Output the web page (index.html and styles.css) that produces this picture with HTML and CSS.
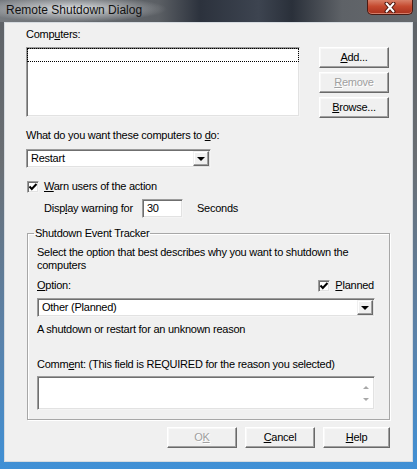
FILE: index.html
```html
<!DOCTYPE html>
<html lang="en">
<head>
    <meta charset="UTF-8">
    <title>Remote Shutdown Dialog</title>
    <link rel="stylesheet" href="styles.css">
</head>
<body>

<div class="window">
    <div class="titlebar">
        <span class="title">Remote Shutdown Dialog</span>
        <span class="close">
            <svg width="14" height="11" viewBox="0 0 14 11">
                <path d="M3.5 1.5 L10.5 9.5 M10.5 1.5 L3.5 9.5" stroke="#4a140c" stroke-width="4" stroke-linecap="round"/>
                <path d="M3.5 1.5 L10.5 9.5 M10.5 1.5 L3.5 9.5" stroke="#fff" stroke-width="2" stroke-linecap="round"/>
            </svg>
        </span>
    </div>

    <div class="client">
        <div class="computers">
            <div class="computers-list">
                <div class="label">Comp<u>u</u>ters:</div>
                <div class="listbox sunken"><div class="focus-row"></div></div>
            </div>
            <div class="side-buttons">
                <button class="btn"><u>A</u>dd...</button>
                <button class="btn" disabled><u>R</u>emove</button>
                <button class="btn"><u>B</u>rowse...</button>
            </div>
        </div>

        <div class="label action-label">What do you want these computers to <u>d</u>o:</div>
        <div class="combo sunken action-combo">
            <span class="combo-text">Restart</span>
            <span class="drop"></span>
        </div>

        <div class="check-row warn-row">
            <span class="checkbox sunken">
                <svg width="10" height="10" viewBox="0 0 10 10"><path d="M1.5 4.5 L3.8 7 L8.5 2" fill="none" stroke="#000" stroke-width="2"/></svg>
            </span>
            <span><u>W</u>arn users of the action</span>
        </div>

        <div class="warning-row">
            <span class="warning-label">Disp<u>l</u>ay warning for</span>
            <span class="textbox sunken seconds-box">30</span>
            <span class="seconds">Seconds</span>
        </div>

        <fieldset class="group">
            <legend>Shutdown Event Tracker</legend>
            <p class="group-text">Select the option that best describes why you want to shutdown the<br>computers</p>
            <div class="option-row">
                <span><u>O</u>ption:</span>
                <span class="check-row">
                    <span class="checkbox sunken">
                        <svg width="10" height="10" viewBox="0 0 10 10"><path d="M1.5 4.5 L3.8 7 L8.5 2" fill="none" stroke="#000" stroke-width="2"/></svg>
                    </span>
                    <span><u>P</u>lanned</span>
                </span>
            </div>
            <div class="combo sunken option-combo">
                <span class="combo-text">Other (Planned)</span>
                <span class="drop"></span>
            </div>
            <p class="reason">A shutdown or restart for an unknown reason</p>
            <div class="label comment-label">Comm<u>e</u>nt: (This field is REQUIRED for the reason you selected)</div>
            <div class="textbox sunken comment-box">
                <div class="scroll">
                    <span class="arrow-up"></span>
                    <span class="arrow-down"></span>
                </div>
            </div>
        </fieldset>

        <div class="dialog-buttons">
            <button class="btn" disabled>O<u>K</u></button>
            <button class="btn"><u>C</u>ancel</button>
            <button class="btn help"><u>H</u>elp</button>
        </div>
    </div>
</div>

</body>
</html>
```

FILE: styles.css
```css
body {
    margin: 0;
    font-family: "Liberation Sans", Arial, sans-serif;
    font-size: 11px;
    letter-spacing: -0.25px;
    color: #000;
}
.window {
    width: 417px;
    height: 469px;
    display: flex;
    flex-direction: column;
    overflow: hidden;
    background: linear-gradient(to bottom, #5d6166 0%, #6a6f74 35%, #5a82aa 72%, #3f90d6 100%);
}
.titlebar {
    height: 22px;
    flex: none;
    display: flex;
    justify-content: space-between;
    align-items: flex-start;
    background:
        radial-gradient(ellipse 95px 13px at 72px 9px, rgba(228, 230, 232, 0.95), rgba(228, 230, 232, 0) 100%),
        linear-gradient(to right, #767a7f 0%, #5b5f64 38%, #2c323d 48%, #3d4450 62%, #2a303a 70%, #5e6267 82%, #66696d 100%);
}
.title {
    font-size: 12px;
    letter-spacing: 0;
    line-height: 14px;
    padding: 3px 0 0 6px;
    color: #111;
}
.close {
    width: 44px;
    height: 14px;
    margin-right: 4px;
    display: flex;
    justify-content: center;
    align-items: center;
    border: 1px solid #4b1a12;
    border-top: none;
    border-radius: 0 0 5px 5px;
    background: linear-gradient(to bottom, #d88068 0%, #c54a30 45%, #a8301c 100%);
    box-shadow: inset 0 -1px 0 rgba(255, 200, 180, 0.5);
}
.client {
    flex: 1;
    margin: 0 4px 7px;
    padding: 5px 22px 0 21px;
    background: #f0f0f0;
    border: 1px solid #d6dbe0;
}
.label {
    line-height: 13px;
}
u {
    text-decoration: underline;
    text-underline-offset: 1px;
}
.sunken {
    box-sizing: border-box;
    background: #fff;
    border: 1px solid;
    border-color: #9c9c9c #f4f4f4 #f4f4f4 #9c9c9c;
    box-shadow: inset 1px 1px 0 #6f6f6f, inset -1px -1px 0 #e2e2e2;
}

/* computers list */
.computers {
    display: flex;
    align-items: flex-start;
}
.listbox {
    width: 274px;
    height: 70px;
    margin-top: 6px;
}
.focus-row {
    height: 14px;
    box-sizing: border-box;
    border: 1px dotted #000;
}
.side-buttons {
    margin: 19px 0 0 19px;
    display: flex;
    flex-direction: column;
    gap: 4px;
}
.btn {
    box-sizing: border-box;
    width: 70px;
    height: 21px;
    padding: 0;
    font-family: inherit;
    font-size: 11px;
    letter-spacing: -0.25px;
    line-height: 17px;
    color: #000;
    background: #f0f0f0;
    border: 1px solid;
    border-color: #fff #696969 #696969 #fff;
    box-shadow: inset -1px -1px 0 #a0a0a0, inset 1px 1px 0 #f8f8f8;
}
.btn:disabled {
    color: #a0a0a0;
    text-shadow: 1px 1px 0 #fff;
}

/* action */
.action-label {
    margin-top: 11px;
}
.combo {
    height: 19px;
    display: flex;
    align-items: center;
    padding: 1px;
}
.action-combo {
    width: 185px;
    margin-top: 7px;
}
.combo-text {
    flex: 1;
    padding-left: 3px;
    line-height: 13px;
}
.drop {
    box-sizing: border-box;
    width: 16px;
    height: 15px;
    display: flex;
    justify-content: center;
    align-items: center;
    background: #f0f0f0;
    border: 1px solid;
    border-color: #f0f0f0 #696969 #696969 #f0f0f0;
    box-shadow: inset -1px -1px 0 #a0a0a0, inset 1px 1px 0 #fff;
}
.drop::after {
    content: "";
    border-left: 4px solid transparent;
    border-right: 4px solid transparent;
    border-top: 4px solid #000;
}
.check-row {
    display: flex;
    align-items: center;
    gap: 5px;
    line-height: 13px;
}
.checkbox {
    width: 12px;
    height: 12px;
    display: flex;
    justify-content: center;
    align-items: center;
}
.warn-row {
    margin: 12px 0 0 1px;
    gap: 5px;
}
.warning-row {
    margin-top: 6px;
    padding-left: 18px;
    display: flex;
    align-items: center;
    line-height: 13px;
}
.warning-label {
    width: 98px;
}
.textbox {
    display: block;
}
.seconds-box {
    width: 41px;
    height: 19px;
    padding: 2px 0 0 4px;
    line-height: 13px;
}
.seconds {
    margin-left: 14px;
}

/* shutdown event tracker */
.group {
    margin: 9px 0 0 1px;
    width: 363px;
    box-sizing: border-box;
    padding: 6px 14px 9px 9px;
    border: 1px solid #a7a7a7;
    box-shadow: inset 1px 1px 0 #fff, 1px 1px 0 #fff;
    min-inline-size: 0;
}
.group legend {
    padding: 0 1px;
    margin-left: -3px;
    line-height: 13px;
}
.group-text {
    margin: 0;
    line-height: 13px;
    white-space: nowrap;
}
.option-row {
    margin-top: 7px;
    display: flex;
    justify-content: space-between;
    align-items: center;
    line-height: 13px;
}
.option-row .check-row {
    margin-right: 1px;
}
.option-combo {
    margin-top: 6px;
}
.reason {
    margin: 6px 0 0;
    line-height: 13px;
}
.comment-label {
    margin-top: 22px;
}
.comment-box {
    margin-top: 5px;
    height: 34px;
    display: flex;
    justify-content: flex-end;
}
.scroll {
    width: 17px;
    display: flex;
    flex-direction: column;
    justify-content: space-around;
    align-items: center;
    padding: 4px 0;
}
.arrow-up {
    border-left: 3px solid transparent;
    border-right: 3px solid transparent;
    border-bottom: 3px solid #a8a8a8;
}
.arrow-down {
    border-left: 3px solid transparent;
    border-right: 3px solid transparent;
    border-top: 3px solid #a8a8a8;
}

/* dialog buttons */
.dialog-buttons {
    margin-top: 7px;
    display: flex;
    justify-content: flex-end;
    gap: 8px;
}
.dialog-buttons .help {
    width: 67px;
}
```
